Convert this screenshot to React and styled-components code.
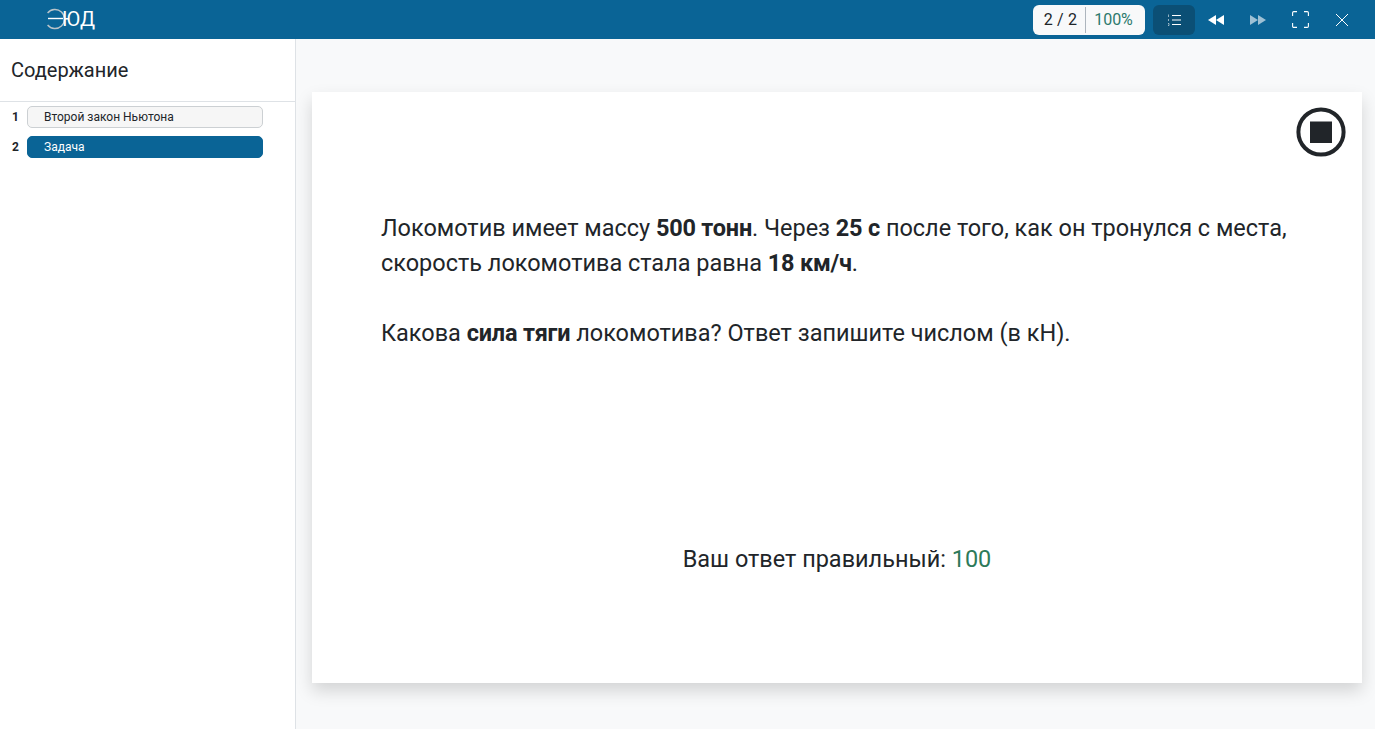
import React from "react";
import styled, { createGlobalStyle } from "styled-components";

const GlobalStyle = createGlobalStyle`
  html, body {
    margin: 0;
    padding: 0;
    height: 100%;
    overflow: hidden;
    font-family: Roboto, "Liberation Sans", sans-serif;
    color: #212529;
  }
`;

const Page = styled.div`
  display: flex;
  flex-direction: column;
  height: 729px;
`;
const TopBar = styled.header`
  display: flex;
  align-items: center;
  justify-content: space-between;
  flex: 0 0 39px;
  background: #0a6496;
  padding: 0 12px 0 46px;
`;
const Logo = styled.div`
  display: flex;
  align-items: center;
  height: 39px;
`;
const LogoText = styled.span`
  margin-left: -6px;
  font-size: 20px;
  line-height: 39px;
  letter-spacing: 0.4px;
  color: #fff;
`;
const Controls = styled.div`
  display: flex;
  align-items: center;
`;
const Counter = styled.div`
  display: flex;
  align-items: center;
  width: 112px;
  height: 30px;
  box-sizing: border-box;
  margin-right: 8px;
  background: #f8f9fa;
  border-radius: 6px;
  font-size: 16px;
`;
const Pages = styled.span`
  flex: 0 0 53px;
  box-sizing: border-box;
  padding-left: 3px;
  text-align: center;
  line-height: 26px;
  letter-spacing: 0.2px;
  border-right: 1px solid #adb5bd;
`;
const Percent = styled.span`
  flex: 1;
  padding-right: 4px;
  text-align: center;
  color: #2d7a6d;
`;
const IconButton = styled.button`
  display: flex;
  align-items: center;
  justify-content: center;
  width: 42px;
  height: 30px;
  padding: 0;
  border: 0;
  border-radius: 6px;
  background: ${(p) => (p.$active ? "#0b4f75" : "transparent")};
  color: #fff;
  opacity: ${(p) => (p.$dim ? 0.6 : 1)};
`;
const Body = styled.div`
  display: flex;
  flex: 1;
  min-height: 0;
`;
const Sidebar = styled.aside`
  flex: 0 0 296px;
  box-sizing: border-box;
  background: #fff;
  border-right: 1px solid #dee2e6;
`;
const SidebarTitle = styled.h2`
  margin: 0;
  height: 63px;
  box-sizing: border-box;
  padding-left: 11px;
  font-size: 20px;
  font-weight: 400;
  line-height: 63px;
  border-bottom: 1px solid #dee2e6;
`;
const Outline = styled.ol`
  display: flex;
  flex-direction: column;
  gap: 8px;
  list-style: none;
  margin: 0;
  padding: 4px 0 0 12px;
`;
const OutlineRow = styled.li`
  display: flex;
  align-items: center;
`;
const OutlineNumber = styled.span`
  flex: 0 0 15px;
  font-size: 12px;
  font-weight: 700;
`;
const OutlineItem = styled.div`
  width: 236px;
  height: 22px;
  box-sizing: border-box;
  padding-left: 16px;
  font-size: 12px;
  line-height: 20px;
  border-radius: 5px;
  border: 1px solid ${(p) => (p.$current ? "#0a6496" : "#ccd0d3")};
  background: ${(p) => (p.$current ? "#0a6496" : "#f6f6f6")};
  color: ${(p) => (p.$current ? "#fff" : "#212529")};
`;
const Main = styled.main`
  flex: 1;
  background: #f8f9fa;
  padding: 53px 13px 0 16px;
`;
const Slide = styled.section`
  position: relative;
  height: 591px;
  box-sizing: border-box;
  padding: 119px 69px 0;
  background: #fff;
  box-shadow: 0 8px 16px rgba(0, 0, 0, 0.15);
  font-size: 23.47px;
  line-height: 35px;
`;
const StopIcon = styled.svg`
  position: absolute;
  top: 15px;
  right: 16px;
`;
const Paragraph = styled.p`
  margin: 0 0 35px;
`;
const Strong = styled.b`
  letter-spacing: -0.2px;
`;
const Answer = styled.p`
  margin: 191px 0 0;
  text-align: center;
`;
const Correct = styled.span`
  color: #2d7a5a;
`;

const App = () => {
  return (
    <Page>
      <GlobalStyle />
      <TopBar>
        <Logo>
          <svg width="22" height="30" viewBox="0 0 22 30">
            <path d="M1.6 8 A 9.5 9.5 0 1 1 1.6 20" fill="none" stroke="#b9c3c9" strokeWidth="1.4" />
            <path d="M2 13.5 H17" stroke="#fff" strokeWidth="1.4" />
          </svg>
          <LogoText>ЮД</LogoText>
        </Logo>
        <Controls>
          <Counter>
            <Pages>2 / 2</Pages>
            <Percent>100%</Percent>
          </Counter>
          <IconButton $active>
            <svg width="16" height="16" viewBox="0 0 16 16" fill="none" stroke="#fff">
              <path d="M6 3.5H15M6 8H15M6 12.5H15" strokeWidth="1" />
              <path d="M2.5 2.5V5M2.5 7V9M2 11.5H3V13.5H2" strokeWidth="0.7" opacity="0.8" />
            </svg>
          </IconButton>
          <IconButton>
            <svg width="18" height="12" viewBox="0 0 18 12" fill="#fff">
              <path d="M9 1V11L1 6Z" />
              <path d="M17 1V11L9 6Z" />
            </svg>
          </IconButton>
          <IconButton $dim>
            <svg width="18" height="12" viewBox="0 0 18 12" fill="#fff">
              <path d="M1 1V11L9 6Z" />
              <path d="M9 1V11L17 6Z" />
            </svg>
          </IconButton>
          <IconButton>
            <svg width="17" height="17" viewBox="0 0 17 17" fill="none" stroke="#fff" strokeWidth="1.1">
              <path d="M0.6 5V1.8A1.2 1.2 0 0 1 1.8 0.6H5M12 0.6H15.2A1.2 1.2 0 0 1 16.4 1.8V5M16.4 12V15.2A1.2 1.2 0 0 1 15.2 16.4H12M5 16.4H1.8A1.2 1.2 0 0 1 0.6 15.2V12" />
            </svg>
          </IconButton>
          <IconButton>
            <svg width="14" height="14" viewBox="0 0 14 14" fill="none" stroke="#fff" strokeWidth="1">
              <path d="M1 1L13 13M13 1L1 13" />
            </svg>
          </IconButton>
        </Controls>
      </TopBar>
      <Body>
        <Sidebar>
          <SidebarTitle>Содержание</SidebarTitle>
          <Outline>
            <OutlineRow>
              <OutlineNumber>1</OutlineNumber>
              <OutlineItem>Второй закон Ньютона</OutlineItem>
            </OutlineRow>
            <OutlineRow>
              <OutlineNumber>2</OutlineNumber>
              <OutlineItem $current>Задача</OutlineItem>
            </OutlineRow>
          </Outline>
        </Sidebar>
        <Main>
          <Slide>
            <StopIcon width="50" height="50" viewBox="0 0 50 50">
              <circle cx="25" cy="25" r="22.6" fill="none" stroke="#212529" strokeWidth="4" />
              <rect x="14" y="14.5" width="22" height="21.5" fill="#212529" />
            </StopIcon>
            <Paragraph>
              Локомотив имеет массу <Strong>500 тонн</Strong>. Через <Strong>25 с</Strong> после того, как он тронулся с места, скорость локомотива стала равна <Strong>18 км/ч</Strong>.
            </Paragraph>
            <Paragraph>
              Какова <Strong>сила тяги</Strong> локомотива? Ответ запишите числом (в кН).
            </Paragraph>
            <Answer>
              Ваш ответ правильный: <Correct>100</Correct>
            </Answer>
          </Slide>
        </Main>
      </Body>
    </Page>
  );
};

export default App;
